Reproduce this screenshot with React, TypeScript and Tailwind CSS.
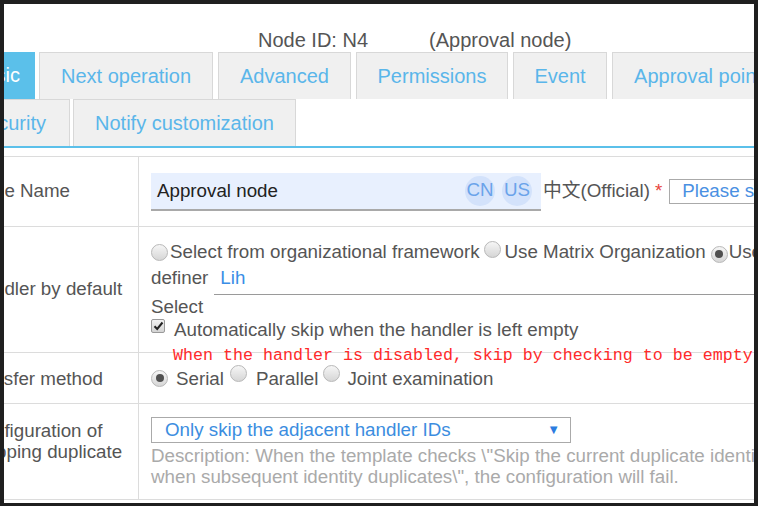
import React from "react";

function Radio({ checked }: { checked?: boolean }) {
  return (
    <span className="inline-flex items-center justify-center w-[17px] h-[17px] rounded-full border border-[#b8b8b8] bg-linear-to-b from-[#f6f6f6] to-[#d6d6d6] shrink-0">
      {checked && <span className="w-[8px] h-[8px] rounded-full bg-[#505050]" />}
    </span>
  );
}

function Checkbox() {
  return (
    <span className="inline-flex items-center justify-center w-[14px] h-[14px] rounded-[2px] border border-[#9a9a9a] bg-linear-to-b from-[#f2f2f2] to-[#d4d4d4] shrink-0">
      <svg width="11" height="10" viewBox="0 0 11 10">
        <path d="M1.5 5.2 L4.2 8 L9.5 1.5" fill="none" stroke="#222" strokeWidth="2" />
      </svg>
    </span>
  );
}

function Tab({ label, w, ml }: { label: string; w: string; ml: string }) {
  return (
    <div className={`flex items-center justify-center h-[47px] ${w} ${ml} border border-b-0 border-[#d8d8d8] bg-[#f0f0f0] text-[20px] leading-[22px] pb-[1px] text-[#5ab6ea] shrink-0`}>
      {label}
    </div>
  );
}

export default function App() {
  return (
    <div className="w-[758px] h-[506px] bg-[#1f1f1f] pt-[4px] pl-[4px] pr-[4px] pb-[3px] font-['Liberation_Sans','Noto_Sans_CJK_SC',sans-serif]">
      <div className="w-[750px] h-[499px] bg-white overflow-hidden">
        {/* Header */}
        <div className="h-[48px] flex items-end pl-[254px] text-[20px] leading-[23px] text-[#555] whitespace-nowrap">
          <span>Node ID: N4</span>
          <span className="ml-[61px]">(Approval node)</span>
        </div>

        {/* Tabs row 1 */}
        <div className="flex h-[47px] whitespace-nowrap">
          <div className="flex items-center justify-end h-[47px] w-[80px] -ml-[49px] pr-[15px] pb-[1px] bg-[#5bc0ea] text-white text-[20px] leading-[22px] shrink-0">
            Basic
          </div>
          <Tab label="Next operation" w="w-[174px]" ml="ml-[4px]" />
          <Tab label="Advanced" w="w-[133px]" ml="ml-[5px]" />
          <Tab label="Permissions" w="w-[152px]" ml="ml-[5px]" />
          <Tab label="Event" w="w-[94px]" ml="ml-[5px]" />
          <Tab label="Approval point" w="w-[172px]" ml="ml-[5px]" />
        </div>
        {/* Tabs row 2 */}
        <div className="flex h-[47px] whitespace-nowrap">
          <div className="flex items-center justify-end h-[47px] w-[100px] -ml-[34px] pr-[23px] pb-[1px] border border-b-0 border-[#d8d8d8] bg-[#f0f0f0] text-[20px] leading-[22px] text-[#5ab6ea] shrink-0">
            Security
          </div>
          <Tab label="Notify customization" w="w-[223px]" ml="ml-[3px]" />
        </div>
        <div className="h-[2px] bg-[#5bc0ea]" />
        <div className="h-[8px]" />

        {/* Table */}
        <div className="-ml-[40px] w-[900px] border-t border-[#dcdcdc] text-[18.75px] text-[#555] whitespace-nowrap">
          {/* Row 1 */}
          <div className="flex h-[70px] border-b border-[#dcdcdc]">
            <div className="w-[175px] shrink-0 border-r border-[#dcdcdc] flex items-center pl-[6px]">Node Name</div>
            <div className="flex items-center pl-[12px]">
              <div className="flex items-center w-[390px] h-[38px] bg-[#e8f0fe] border-b-2 border-[#a9a9a9] pl-[6px] pr-[9px]">
                <span className="text-[#222] flex-1 pt-[1px]">Approval node</span>
                <span className="flex items-center justify-center w-[30px] h-[30px] rounded-full bg-[#d3e2fb] text-[#6aa3ea]">CN</span>
                <span className="ml-[7px] flex items-center justify-center w-[30px] h-[30px] rounded-full bg-[#d3e2fb] text-[#6aa3ea]">US</span>
              </div>
              <span className="ml-[2px]">中文(Official)</span>
              <span className="ml-[5px] text-[#e8453c]">*</span>
              <div className="ml-[7px] h-[25px] flex items-center border border-[#aaa] pl-[12px] w-[200px] text-[#4a90e2]">
                Please select
              </div>
            </div>
          </div>

          {/* Row 2 */}
          <div className="flex h-[126px] border-b border-[#dcdcdc]">
            <div className="w-[175px] shrink-0 border-r border-[#dcdcdc] flex items-center pl-[6px]">Handler by default</div>
            <div className="flex flex-col pl-[12px] pt-[13px] flex-1">
              <div className="flex items-center h-[25px]">
                <Radio />
                <span className="ml-[2px]">Select from organizational framework</span>
                <span className="ml-[4px]"><Radio /></span>
                <span className="ml-[4px]">Use Matrix Organization</span>
                <span className="ml-[5px]"><Radio checked /></span>
                <span className="ml-[1px]">Use definer</span>
              </div>
              <div className="flex items-start h-[30px]">
                <span className="leading-[25px]">definer</span>
                <div className="flex-1 h-[30px] ml-[6px] border-b border-[#9a9a9a] leading-[25px] pl-[6px] text-[#3a8ee6]">
                  Lih
                </div>
              </div>
              <div className="leading-[23px] h-[23px]">Select</div>
              <div className="flex items-center h-[24px]">
                <span className="-mt-[9px]"><Checkbox /></span>
                <span className="ml-[9px]">Automatically skip when the handler is left empty</span>
              </div>
              <div className="h-[26px] leading-[28px] pl-[22px] font-['Liberation_Mono',monospace] text-[16.67px] text-[#ff2a2a]">
                When the handler is disabled, skip by checking to be empty
              </div>
            </div>
          </div>

          {/* Row 3 */}
          <div className="flex h-[51px] border-b border-[#dcdcdc]">
            <div className="w-[175px] shrink-0 border-r border-[#dcdcdc] flex items-center pl-[2px] pt-[3px]">Transfer method</div>
            <div className="flex items-center pl-[12px] pt-[3px]">
              <span className="-mt-[6px]"><Radio checked /></span>
              <span className="ml-[8px]">Serial</span>
              <span className="ml-[6px] -mt-[6px]"><Radio /></span>
              <span className="ml-[9px]">Parallel</span>
              <span className="ml-[5px] -mt-[6px]"><Radio /></span>
              <span className="ml-[7px]">Joint examination</span>
            </div>
          </div>

          {/* Row 4 */}
          <div className="flex h-[96px] border-b border-[#dcdcdc]">
            <div className="w-[175px] shrink-0 border-r border-[#dcdcdc] pl-[6px] pt-[16px] leading-[21px] whitespace-normal">
              Configuration of Skipping duplicate
            </div>
            <div className="flex flex-col pl-[12px] pt-[13px]">
              <div className="flex items-center w-[420px] h-[26px] border border-[#aaa] pl-[13px] pr-[10px] text-[#3b8de0]">
                <span className="flex-1">Only skip the adjacent handler IDs</span>
                <span className="text-[13px] text-[#2b7de0]">▼</span>
              </div>
              <div className="mt-[2px] leading-[21px] text-[#aaa]">
                <div>Description: When the template checks \"Skip the current duplicate identity</div>
                <div>when subsequent identity duplicates\", the configuration will fail.</div>
              </div>
            </div>
          </div>
          <div className="h-[20px]" />
        </div>
      </div>
    </div>
  );
}
